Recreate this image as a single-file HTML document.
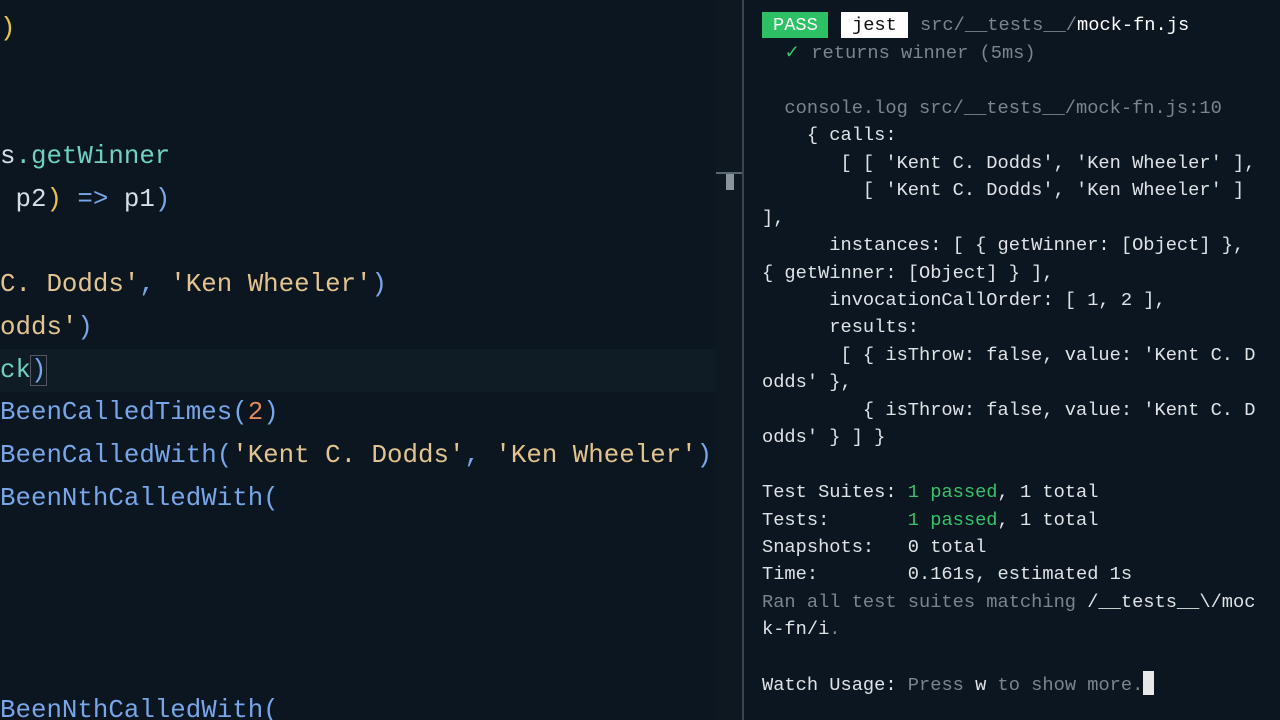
<!DOCTYPE html>
<html><head><meta charset="utf-8"><style>
html,body{margin:0;width:1280px;height:720px;overflow:hidden}
body{background:#0b1620;position:relative;font-family:"Liberation Mono",monospace}
.l{position:absolute;left:0;font-size:25.8px;line-height:42.7px;height:42.7px;white-space:pre;color:#d8dee4}
.t{position:absolute;left:762px;font-size:18.7px;line-height:27.4px;height:27.4px;white-space:pre;color:#dfe3e6}
.y{color:#e6c54a}.c{color:#6fd2c0}.b{color:#78a6e8}.s{color:#e3c48e}.o{color:#e08a5a}.g{color:#7b8791}.gr{color:#35c46a}.dim{color:#7b858e}
</style></head><body>
<div style="position:absolute;left:0;top:349px;width:742px;height:43px;background:#0f1b25"></div>
<div style="position:absolute;left:742px;top:0;width:2px;height:720px;background:#3a4550"></div>
<div style="position:absolute;left:716px;top:0;width:26px;height:720px;background:#0d1821"></div>
<div style="position:absolute;left:716px;top:172px;width:26px;height:2px;background:#5a6670"></div>
<div style="position:absolute;left:726px;top:174px;width:8px;height:16px;background:#8a949c"></div>
<div class="l y" style="top:8px">)</div>
<div class="l" style="top:136px">s<span class="c">.getWinner</span></div>
<div class="l" style="top:179px"> p2<span class="y">)</span> <span class="b">=&gt;</span> p1<span class="b">)</span></div>
<div class="l s" style="top:264px">C. Dodds'<span class="b">,</span> 'Ken Wheeler'<span class="b">)</span></div>
<div class="l s" style="top:307px">odds'<span class="b">)</span></div>
<div class="l c" style="top:350px">ck<span class="b" style="outline:1px solid #556; ">)</span></div>
<div class="l b" style="top:392px">BeenCalledTimes(<span class="o">2</span>)</div>
<div class="l b" style="top:435px">BeenCalledWith(<span class="s">'Kent C. Dodds'</span>, <span class="s">'Ken Wheeler'</span>)</div>
<div class="l b" style="top:478px">BeenNthCalledWith(</div>
<div class="l b" style="top:690px">BeenNthCalledWith(</div>

<div style="position:absolute;left:762px;top:12px;width:66px;height:26px;background:#2ec065"></div>
<div style="position:absolute;left:841px;top:12px;width:67px;height:26px;background:#fff"></div>
<div class="t" style="top:12px;left:773px;color:#fff">PASS</div>
<div class="t" style="top:12px;left:852px;color:#111">jest</div>
<div class="t" style="top:12px;left:920px"><span class="dim">src/__tests__/</span><span style="color:#fff">mock-fn.js</span></div>
<div class="t dim" style="top:40px">  <span class="gr">✓</span> returns winner (5ms)</div>
<div class="t dim" style="top:95px">  console.log src/__tests__/mock-fn.js:10</div>
<div class="t" style="top:122px">    { calls:</div>
<div class="t" style="top:150px">       [ [ 'Kent C. Dodds', 'Ken Wheeler' ],</div>
<div class="t" style="top:177px">         [ 'Kent C. Dodds', 'Ken Wheeler' ]</div>
<div class="t" style="top:205px">],</div>
<div class="t" style="top:232px">      instances: [ { getWinner: [Object] },</div>
<div class="t" style="top:260px">{ getWinner: [Object] } ],</div>
<div class="t" style="top:287px">      invocationCallOrder: [ 1, 2 ],</div>
<div class="t" style="top:314px">      results:</div>
<div class="t" style="top:342px">       [ { isThrow: false, value: 'Kent C. D</div>
<div class="t" style="top:369px">odds' },</div>
<div class="t" style="top:397px">         { isThrow: false, value: 'Kent C. D</div>
<div class="t" style="top:424px">odds' } ] }</div>
<div class="t" style="top:479px">Test Suites: <span class="gr">1 passed</span>, 1 total</div>
<div class="t" style="top:507px">Tests:       <span class="gr">1 passed</span>, 1 total</div>
<div class="t" style="top:534px">Snapshots:   0 total</div>
<div class="t" style="top:561px">Time:        0.161s, estimated 1s</div>
<div class="t" style="top:589px"><span class="dim">Ran all test suites matching </span>/__tests__\/moc</div>
<div class="t" style="top:616px">k-fn/i<span class="dim">.</span></div>
<div class="t" style="top:671px">Watch Usage: <span class="dim">Press </span>w<span class="dim"> to show more.</span><span style="display:inline-block;width:11px;height:24px;background:#e8e8e8;vertical-align:-5px"></span></div>
</body></html>
